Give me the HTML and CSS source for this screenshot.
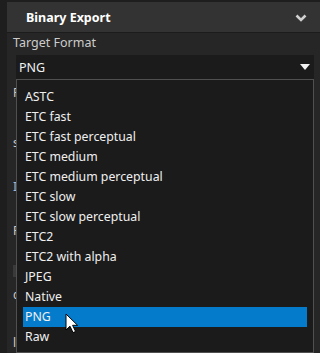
FILE: index.html
```html
<!DOCTYPE html>
<html lang="en">
<head>
    <meta charset="UTF-8">
    <meta name="viewport" content="width=device-width, initial-scale=1.0">
    <title>Binary Export</title>
    <link rel="stylesheet" href="styles.css">
</head>
<body>
    <div class="panel">
        <div class="panel-header">
            <span class="panel-title">Binary Export</span>
            <svg class="chevron" width="12" height="8" viewBox="0 0 12 8">
                <path d="M1.5 1.5 L6 6 L10.5 1.5" fill="none" stroke="#d0d0d0" stroke-width="2.6"/>
            </svg>
        </div>

        <div class="panel-body">
            <div class="field-label">Target Format</div>
            <div class="select">
                <div class="select-value">
                    <span>PNG</span>
                    <svg width="10" height="6" viewBox="0 0 10 6">
                        <path d="M0 0 H10 L5 6 Z" fill="#f2f2f2"/>
                    </svg>
                </div>

                <!-- open dropdown, lies over the rest of the form -->
                <ul class="select-list">
                    <li>ASTC</li>
                    <li>ETC fast</li>
                    <li>ETC fast perceptual</li>
                    <li>ETC medium</li>
                    <li>ETC medium perceptual</li>
                    <li>ETC slow</li>
                    <li>ETC slow perceptual</li>
                    <li>ETC2</li>
                    <li>ETC2 with alpha</li>
                    <li>JPEG</li>
                    <li>Native</li>
                    <li class="selected">PNG</li>
                    <li>Raw</li>
                </ul>
                <svg class="cursor" width="14" height="21" viewBox="0 0 14 21">
                    <path d="M1 1 V17 L5 13.2 L8 19.6 L10.6 18.5 L7.6 12.3 H12.6 Z" fill="#fff" stroke="#000" stroke-width="1" stroke-linejoin="round"/>
                </svg>
            </div>

            <!-- form fields under the open list, only their first pixels show -->
            <div class="hidden-rows">
                <div class="row r1">P</div>
                <div class="row r2">s</div>
                <div class="row r3">I</div>
                <div class="row r4">F</div>
                <div class="row r5"><span class="mini-btn"></span></div>
                <div class="row r6">c</div>
                <div class="row r7">l</div>
            </div>
        </div>
    </div>
</body>
</html>
```

FILE: styles.css
```css
body {
    margin: 0;
    width: 320px;
    height: 353px;
    overflow: hidden;
    background-color: #1e1e1e;
    font-family: "Noto Sans", "Open Sans", sans-serif;
    font-size: 12px;
    color: #f0f0f0;
}
.panel {
    margin: 2px 0 0 7px;
    height: 351px;
    background-color: #262626;
}
.panel-header {
    height: 30px;
    display: flex;
    align-items: center;
    justify-content: space-between;
    padding: 0 13px 0 19px;
    background-color: #333333;
    border-bottom: 1px solid #1c1c1c;
}
.panel-title {
    font-weight: bold;
    font-size: 12.5px;
    color: #ffffff;
}
.chevron {
    margin-top: 1px;
}
.panel-body {
    padding: 0 6px;
}
.field-label {
    height: 22px;
    line-height: 20px;
    color: #cccccc;
    font-size: 12.5px;
}
.select {
    position: relative;
    margin-left: 3px;
}
.select-value {
    height: 24px;
    display: flex;
    align-items: center;
    justify-content: space-between;
    padding: 0 4px 0 3px;
    background-color: #1b1b1b;
    font-size: 12.5px;
}
.select-list {
    position: absolute;
    top: 24px;
    left: 0;
    right: 0;
    z-index: 2;
    margin: 0;
    padding: 7px 6px 5px 6px;
    list-style: none;
    background-color: #1b1b1b;
    border: 1px solid #505050;
    font-size: 12.3px;
}
.select-list li {
    height: 20px;
    line-height: 20px;
    padding-left: 2px;
    white-space: nowrap;
}
.select-list li.selected {
    background-color: #047ccb;
}
.cursor {
    position: absolute;
    top: 258px;
    left: 49px;
    z-index: 3;
}
.hidden-rows {
    width: 3px;
    overflow: hidden;
    color: #cccccc;
}
.row {
    line-height: 16px;
}
.r1 { margin-top: 6px; height: 50px; }
.r2 { height: 44px; }
.r3 { height: 44px; color: #9fb8d8; }
.r4 { height: 42px; }
.r5 { height: 22px; margin-left: -5px; }
.r6 { height: 48px; }
.mini-btn {
    display: block;
    width: 8px;
    height: 12px;
    background-color: #3a3a3a;
    border-radius: 2px 0 0 2px;
}
```
